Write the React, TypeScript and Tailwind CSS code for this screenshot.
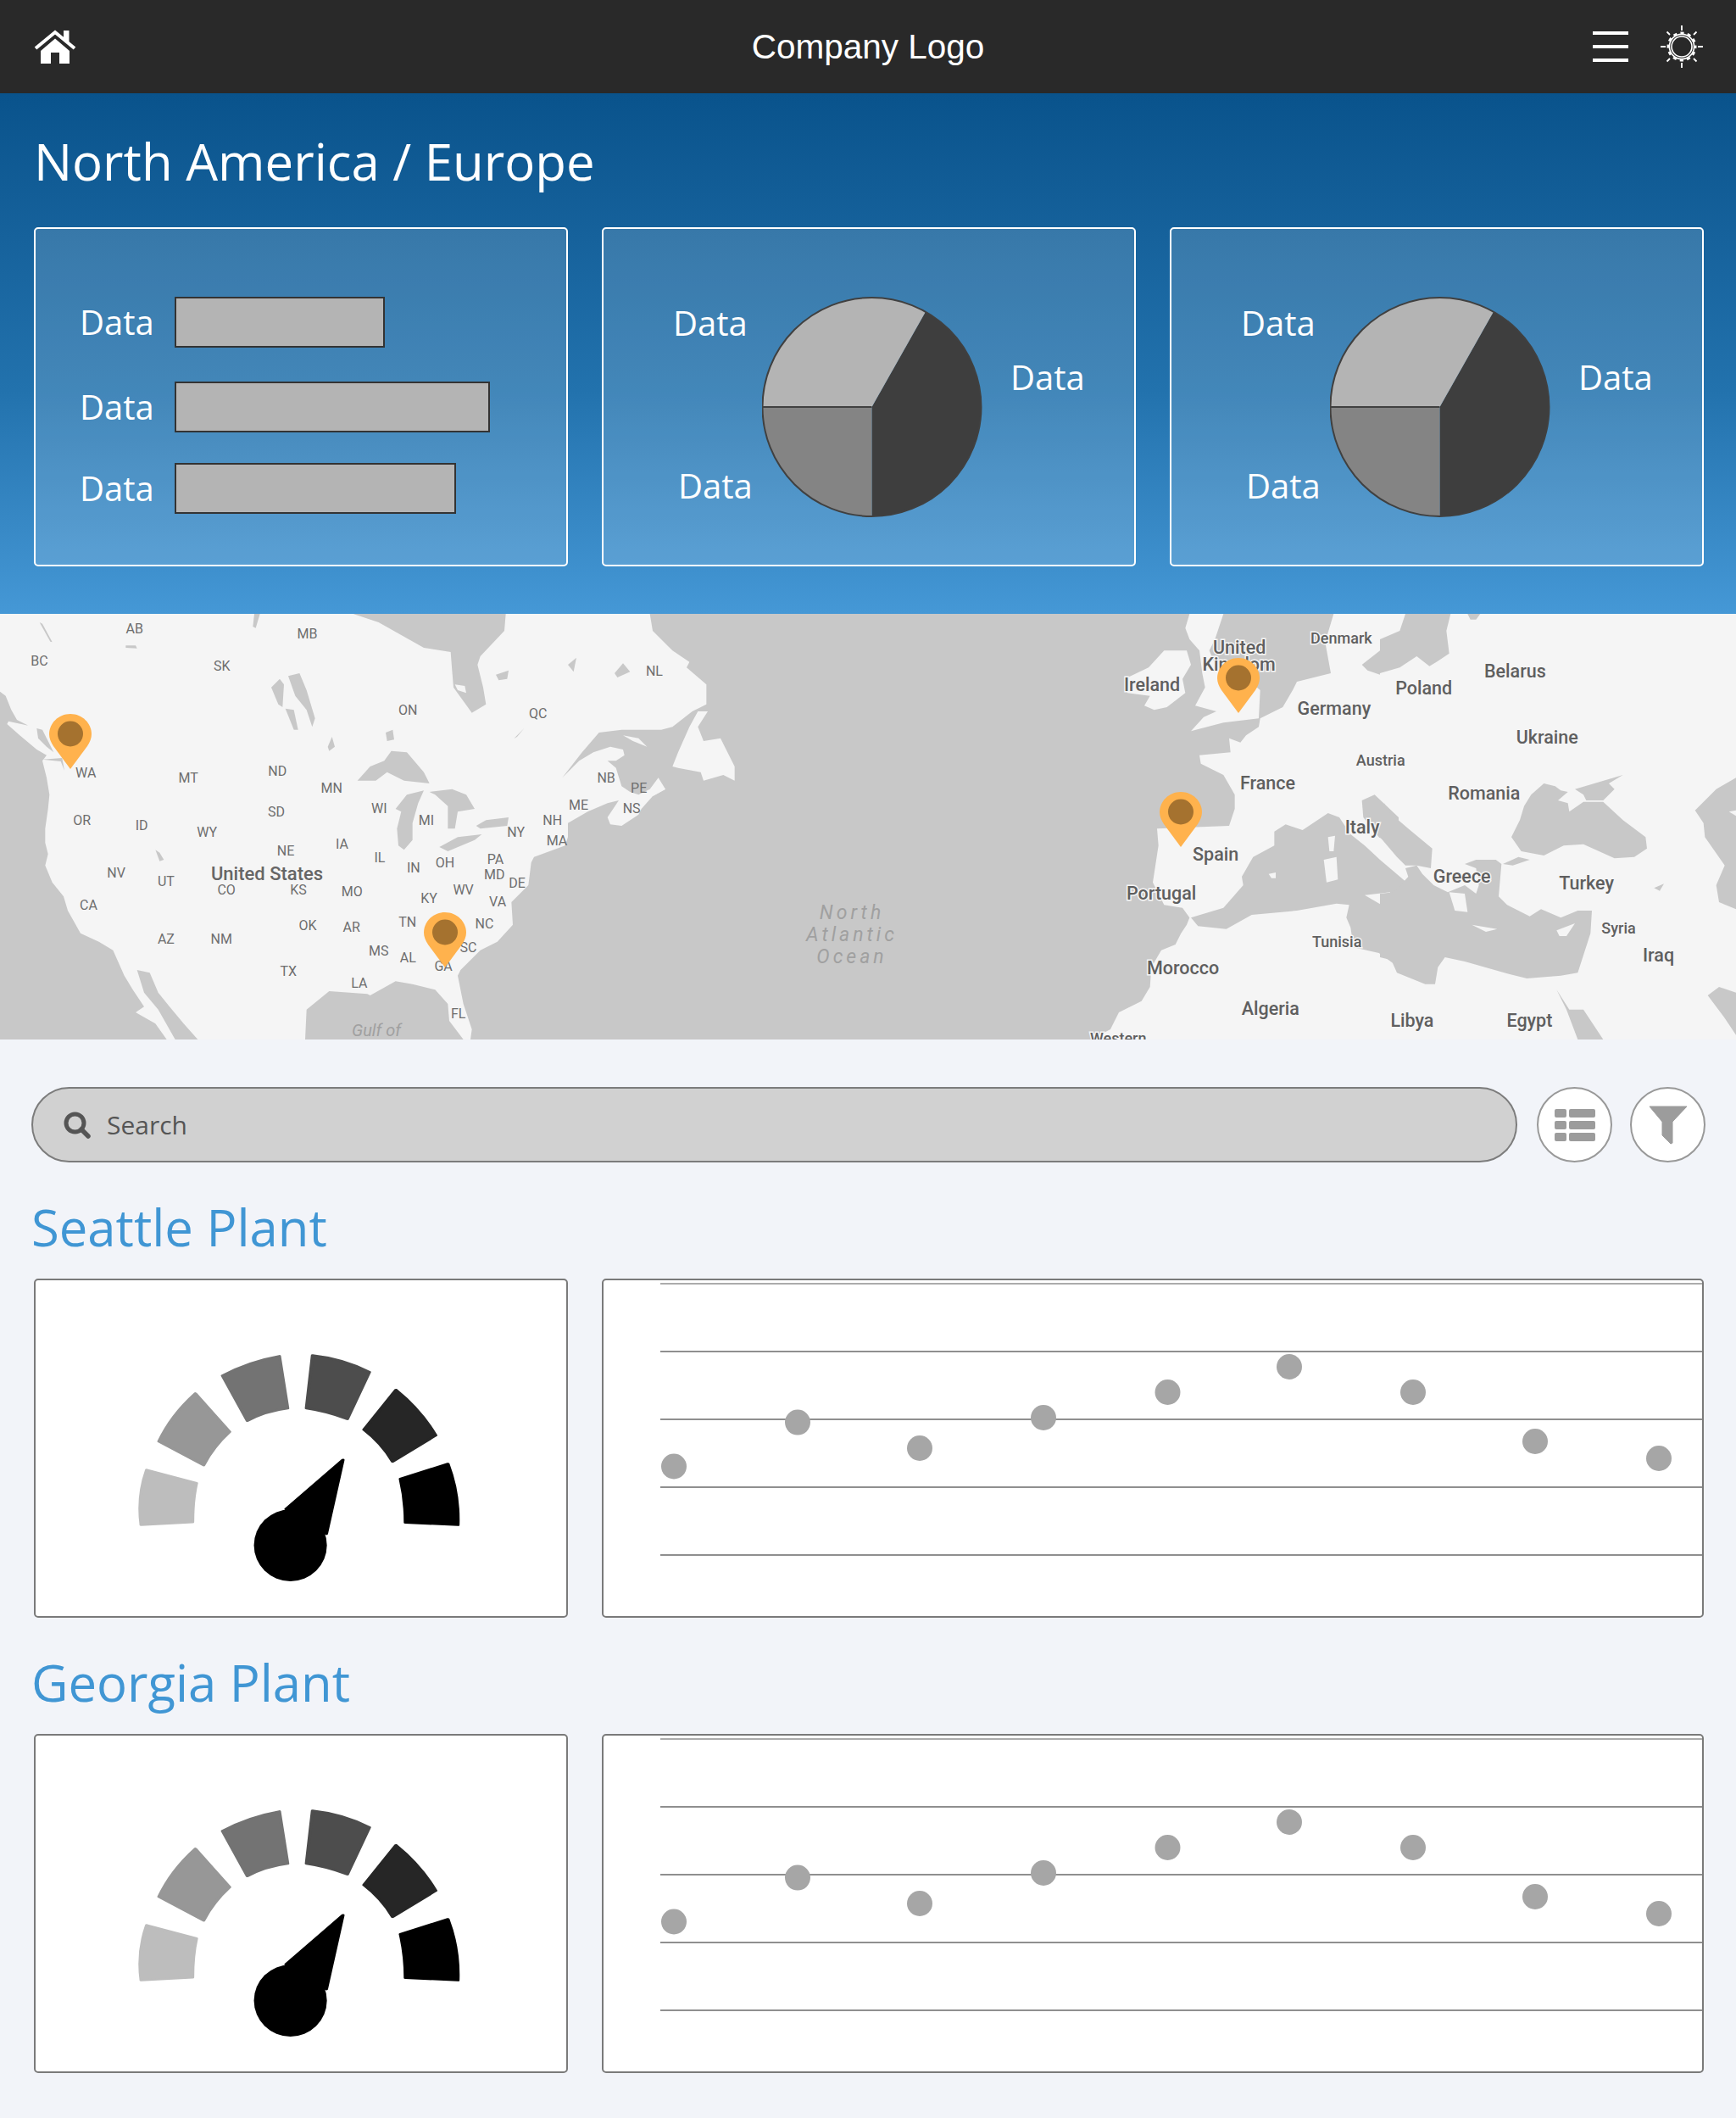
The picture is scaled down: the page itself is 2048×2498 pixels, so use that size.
// Map outlines are traced from four 3x crops, each group below scales them back down
const mapShapes: { x: number; land?: string[]; water?: string[]; islands?: string[] }[] = [
  {
    x: 0,
    water: [
      "0,275 20,290 40,340 60,375 100,395 30,380 25,390 70,430 130,480 165,500 150,520 165,580 175,640 170,690 160,760 160,810 170,850 160,890 185,950 225,1000 240,1050 285,1130 350,1160 400,1190 440,1280 470,1330 510,1390 480,1410 550,1450 590,1506 0,1506",
      "485,1260 530,1270 560,1340 600,1390 650,1450 700,1506 620,1506 560,1400 510,1340",
      "130,405 150,410 190,490 165,470 135,440",
      "150,515 220,510 228,555 215,522",
      "140,30 150,35 185,100 178,98",
      "1020,220 1060,210 1085,270 1115,370 1105,400 1085,340 1045,290",
      "960,260 990,230 1005,250 1000,330 985,320",
      "1010,335 1040,340 1055,410 1040,410",
      "550,835 565,845 580,870 565,875",
      "1080,1506 1085,1400 1165,1335 1300,1345 1310,1350 1400,1300 1460,1310 1540,1330 1585,1380 1590,1440 1640,1506",
      "900,0 920,0 905,50 895,45",
      "1160,470 1175,435 1185,470 1165,485",
      "445,112 480,112 485,122 445,120",
    ],
  },
  {
    x: 400,
    water: [
      "50,0 590,0 585,60 500,150 490,180 510,260 520,320 470,350 405,260 400,200 395,135 300,120 140,30",
      "1100,0 1110,60 1180,130 1240,170 1230,190 1300,250 1300,320 1250,345 1180,400 1140,410 1000,410 920,420 860,490 790,580 850,520 900,490 960,470 1005,480 1010,500 980,520 950,520 980,545 1000,610 1030,630 1060,640 1100,620 1130,580 1155,620 1110,645 1070,690 1060,710 1000,750 960,745 950,720 990,660 950,670 880,700 810,740 810,790 800,820 690,860 680,880 670,960 610,1020 615,1100 560,1160 500,1190 430,1260 420,1280 440,1380 470,1470 465,1506 1500,1506 1500,0",
      "65,590 110,540 160,520 185,485 240,490 300,560 320,600 230,590 170,560 130,590",
      "200,690 240,640 300,625 280,670 260,740 260,800 230,835 210,820 205,760 220,700",
      "320,630 400,620 450,640 480,690 420,700 410,760 385,760 385,680 340,640",
      "355,825 420,790 505,780 480,800 385,840",
      "485,750 520,730 600,720 595,750 500,760",
      "165,420 190,410 195,445 170,450",
      "555,215 600,200 595,230 565,235",
      "975,210 1005,175 1030,205 985,225",
      "810,180 840,155 830,205",
      "620,440 655,405 630,435",
    ],
    islands: [
      "1180,540 1200,490 1240,400 1270,345 1305,345 1270,400 1290,450 1350,440 1380,500 1400,540 1400,590 1360,570 1290,590 1280,560 1200,545",
      "1005,430 1060,440 1090,470 1040,450",
      "410,250 445,255 450,280 420,270",
      "1130,600 1155,620 1110,645",
    ],
  },
  {
    x: 1230,
    land: [
      "1020,210 900,240 885,270 850,330 770,370 765,400 720,430 700,455 660,440 665,490 555,500 560,530 640,570 680,640 680,690 660,750 405,760 410,820 390,950 430,1030 495,1040 520,1075 510,1100 490,1130 470,1170 420,1190 385,1250 380,1320 350,1370 270,1410 240,1470 170,1506 2460,1506 2460,0 1030,0 1000,100",
      "505,50 520,0 640,0 610,90 590,130 620,200 700,210 770,270 765,370 640,385 525,415 570,365 615,345 540,325 575,260 565,210 555,130 520,90",
      "375,190 430,130 510,130 525,180 495,230 505,280 440,330 395,340 360,325 380,290 300,280 290,230",
    ],
    water: [
      "525,1075 640,1040 710,960 705,930 745,860 820,820 820,770 860,745 920,765 1010,705 1050,720 1090,780 1140,820 1194,870 1300,960 1300,1265 1260,1250 1190,1200 1100,1180 1090,1110 1075,1075 1085,1030 1040,1025 900,1050 740,1065 650,1115 550,1105",
      "1130,660 1175,640 1260,720 1260,830 1190,790 1135,720",
      "1130,180 1194,130 1194,215 1150,200",
    ],
    islands: [
      "1140,995 1230,985 1225,1045",
      "800,920 825,915 825,935 810,935",
      "1010,790 1035,785 1030,840 1015,840",
      "995,870 1040,860 1045,940 1005,950",
    ],
  },
  {
    x: 1628,
    water: [
      "0,90 70,60 90,0 250,0 235,60 245,140 200,170 175,185 130,150 70,190 0,210",
      "0,700 15,670 30,700 100,760 185,830 180,900 130,890 90,890 60,860 0,790",
      "0,990 50,985 100,930 90,900 130,890 150,920 190,960 240,985 300,960 340,990 350,960 340,900 300,885 340,870 410,870 430,885 420,1000 450,1030 490,1050 530,1070 570,1045 640,1075 700,1050 750,1050 745,1130 700,1270 640,1280 520,1290 440,1270 300,1230 230,1215 205,1250 195,1310 160,1310 60,1270 40,1225 0,1215",
      "465,790 495,730 510,680 535,640 580,600 620,610 640,625 665,630 630,660 665,670 670,700 720,665 790,665 860,730 940,790 945,830 900,860 830,865 720,815 650,820 580,855 500,840",
      "690,620 860,570 810,600 830,620 790,660 730,660 720,640",
      "435,885 490,860 530,870 470,890",
      "1260,580 1190,620 1115,695 1145,740 1150,790 1220,890 1190,960 1200,1020 1260,1045",
      "625,1330 670,1400 720,1400 790,1506 700,1506 660,1400",
      "1160,1350 1200,1320 1260,1340 1260,1490 1220,1430",
      "310,0 355,0 340,20 320,20",
      "970,970 1005,955 990,980",
    ],
    islands: [
      "245,985 300,990 310,1055 265,1050",
      "325,1100 415,1115 375,1125",
      "625,1120 690,1095 660,1140 635,1140",
      "1235,700 1260,695 1260,715",
    ],
  },
];

const wx = 1024 / 1568;
const westLabels: [string, number, number][] = [
  ["AB", 243, 80], ["MB", 555, 98], ["BC", 71, 195], ["SK", 401, 213], ["NL", 1182, 230], ["ON", 737, 368], ["QC", 972, 380],
  ["WA", 155, 590], ["MT", 340, 608], ["ND", 501, 584], ["MN", 599, 644], ["NB", 1095, 608], ["PE", 1154, 644], ["ME", 1045, 704],
  ["NS", 1141, 717], ["WI", 685, 716], ["SD", 499, 728], ["NH", 998, 758], ["OR", 148, 758], ["ID", 256, 776], ["WY", 374, 800],
  ["MI", 770, 758], ["NY", 932, 800], ["MA", 1006, 832], ["IA", 618, 842], ["NE", 516, 866], ["IL", 686, 890], ["PA", 895, 896],
  ["OH", 804, 908], ["IN", 747, 926], ["MD", 893, 950], ["NV", 210, 944], ["UT", 300, 974], ["DE", 934, 980], ["CO", 409, 1004],
  ["KS", 539, 1004], ["MO", 636, 1010], ["WV", 837, 1004], ["KY", 775, 1034], ["VA", 899, 1046], ["CA", 160, 1058], ["NC", 875, 1124],
  ["TN", 736, 1120], ["OK", 556, 1130], ["AR", 635, 1136], ["AZ", 300, 1178], ["NM", 400, 1178], ["SC", 846, 1208], ["MS", 684, 1220],
  ["AL", 737, 1244], ["GA", 801, 1276], ["TX", 521, 1292], ["LA", 649, 1336], ["FL", 828, 1444],
];
const eastLabels: [string, number, number, number][] = [
  ["Denmark", 855, 110, 18], ["United", 671, 146, 21.5], ["Kingdom", 670, 208, 21.5], ["Belarus", 1169, 232, 21.5], ["Ireland", 513, 278, 21.5],
  ["Poland", 1004, 290, 21.5], ["Germany", 842, 364, 21.5], ["Ukraine", 1227, 465, 21.5], ["Austria", 926, 543, 18], ["France", 722, 628, 21.5],
  ["Romania", 1113, 663, 21.5], ["Italy", 893, 783, 21.5], ["Spain", 628, 880, 21.5], ["Greece", 1073, 958, 21.5], ["Turkey", 1298, 980, 21.5],
  ["Portugal", 530, 1017, 21.5], ["Syria", 1356, 1137, 18], ["Tunisia", 847, 1185, 18], ["Iraq", 1428, 1235, 21.5], ["Morocco", 569, 1282, 21.5],
  ["Algeria", 727, 1426, 21.5], ["Libya", 983, 1468, 21.5], ["Egypt", 1195, 1468, 21.5], ["Western", 452, 1528, 18],
];
const pins = [
  { x: 83, y: 907 },
  { x: 525, y: 1141 },
  { x: 1461, y: 841 },
  { x: 1393, y: 999 },
];
const pieLabels = [
  { left: "left-[82px]", top: "top-[84px]" },
  { left: "left-[88px]", top: "top-[276px]" },
  { left: "left-[480px]", top: "top-[148px]" },
];
const bars = [
  { label: "Data", width: "w-[248px]", space: "" },
  { label: "Data", width: "w-[372px]", space: "mt-[40px]" },
  { label: "Data", width: "w-[332px]", space: "mt-[36px]" },
];
const dots = [
  [795, 1729.5], [941, 1677.6], [1085, 1708], [1231, 1672], [1377.5, 1642], [1521, 1612], [1667, 1642], [1811, 1700], [1957, 1720],
];

function WorldMap() {
  return (
    <svg viewBox="0 0 2048 502" className="block w-full h-[502px] bg-[#c8c8c8]">
      <rect x="0" y="0" width="900" height="502" fill="#f5f5f5" />
      {mapShapes.map((group) => (
        <g key={group.x} transform={`translate(${group.x} 0) scale(${1 / 3})`}>
          {group.land?.map((p) => <polygon key={p} points={p} fill="#f5f5f5" />)}
          {group.water?.map((p) => <polygon key={p} points={p} fill="#c8c8c8" />)}
          {group.islands?.map((p) => <polygon key={p} points={p} fill="#f5f5f5" />)}
        </g>
      ))}
      <g fontFamily="Roboto, sans-serif" textAnchor="middle" fill="#6e6e6e">
        {westLabels.map(([t, x, y]) => (
          <text key={t} x={x * wx} y={y / 3 - 4} fontSize="16">{t}</text>
        ))}
        <text x={315} y={314} fontSize="22" fontWeight="500" fill="#666">United States</text>
        {eastLabels.map(([t, x, y, s]) => (
          <text key={t} x={1024 + x * wx} y={y / 3 - 2} fontSize={s} fontWeight="500" fill="#5f5f5f" stroke="#f5f5f5" strokeWidth="3" paintOrder="stroke">{t}</text>
        ))}
        <g fontSize="23" fontStyle="italic" letterSpacing="4" fill="#a0a0a0">
          <text x={1005} y={360}>North</text>
          <text x={1005} y={386}>Atlantic</text>
          <text x={1005} y={412}>Ocean</text>
        </g>
        <text x={444} y={498} fontSize="20" fontStyle="italic" fill="#a0a0a0">Gulf of</text>
      </g>
      {pins.map((p) => (
        <g key={p.x} transform={`translate(${p.x} ${p.y - 724})`}>
          <path d="M0 0 L-20 -27 C-23 -32 -25 -36 -25 -41 C-25 -54 -14 -65 0 -65 C14 -65 25 -54 25 -41 C25 -36 23 -32 20 -27Z" fill="#ffb24d" />
          <circle cx="0" cy="-41.5" r="15" fill="#a5722f" />
        </g>
      ))}
    </svg>
  );
}

function BarCard() {
  return (
    <div className="h-[400px] rounded-[5px] border-2 border-white bg-white/15 pt-[80px] pl-[52px]">
      {bars.map((b, i) => (
        <div key={i} className={`flex items-center h-[60px] ${b.space}`}>
          <span className="w-[112px] text-[40px] text-white">{b.label}</span>
          <div className={`h-full bg-[#b4b4b4] border-2 border-[#333] ${b.width}`} />
        </div>
      ))}
    </div>
  );
}

function PieCard() {
  return (
    <div className="relative h-[400px] rounded-[5px] border-2 border-white bg-white/15">
      {pieLabels.map((l, i) => (
        <span key={i} className={`absolute text-[40px] leading-[54px] text-white ${l.left} ${l.top}`}>Data</span>
      ))}
      <svg viewBox="0 0 260 260" className="absolute left-[187px] top-[80px] w-[260px] h-[260px]">
        <path d="M129.5 130 L192.9 17.7 A129 129 0 0 1 129.5 259Z" fill="#3e3e3e" />
        <path d="M129.5 130 L129.5 259 A129 129 0 0 1 0.5 130Z" fill="#848484" />
        <path d="M129.5 130 L0.5 130 A129 129 0 0 1 192.9 17.7Z" fill="#b4b4b4" />
        <circle cx="129.5" cy="130" r="129" fill="none" stroke="#404040" strokeWidth="2" />
        <path d="M1 130 L129.5 130" stroke="#404040" strokeWidth="2" />
      </svg>
    </div>
  );
}

function Gauge() {
  return (
    <div className="h-[400px] rounded-[5px] border-2 border-[#7a7a7a] bg-white">
      <svg viewBox="64 592 960 944" preserveAspectRatio="none" className="block w-full h-full" strokeLinejoin="round" strokeWidth="6">
        <path d="M265 1125 L355 1162 Q348 1210 348 1272 L255 1280 Q248 1200 265 1125Z" fill="#bdbdbd" stroke="#bdbdbd" />
        <path d="M353 910 L415 1018 Q385 1060 368 1112 L287 1045 Q310 970 353 910Z" fill="#979797" stroke="#979797" />
        <path d="M505 805 L520 952 Q480 960 447 987 L402 860 Q450 820 505 805Z" fill="#737373" stroke="#737373" />
        <path d="M565 803 Q620 812 668 850 L628 982 Q590 960 554 952Z" fill="#4d4d4d" stroke="#4d4d4d" />
        <path d="M716 900 Q760 955 788 1028 L710 1102 Q690 1050 658 1012Z" fill="#262626" stroke="#262626" />
        <path d="M810 1108 Q830 1190 828 1280 L733 1273 Q733 1210 724 1150Z" fill="#000" stroke="#000" />
        <ellipse cx="525" cy="1337" rx="66" ry="101" fill="#000" />
        <path d="M620 1097 L517 1235 L590 1305Z" fill="#000" stroke="#000" strokeWidth="6" />
      </svg>
    </div>
  );
}

function DotChart() {
  return (
    <div className="h-[400px] rounded-[5px] border-2 border-[#7a7a7a] bg-white overflow-hidden">
      <svg viewBox="712 1510 1296 396" className="block w-full h-full">
        {[1514, 1594, 1674, 1754, 1834].map((y, i) => (
          <line key={y} x1="779" x2="2008" y1={y} y2={y} stroke={i === 0 ? "#ababab" : "#8f8f8f"} strokeWidth="2" />
        ))}
        {dots.map(([x, y]) => (
          <circle key={x} cx={x} cy={y} r="15" fill="#a6a6a6" />
        ))}
      </svg>
    </div>
  );
}

function PlantSection({ name }: { name: string }) {
  return (
    <section>
      <h2 className="h-[137px] pt-[16px] flex items-center text-[59.8px] text-[#4096d4]">{name}</h2>
      <div className="ml-[3px] mr-[2px] grid grid-cols-[630px_1fr] gap-10">
        <Gauge />
        <DotChart />
      </div>
    </section>
  );
}

export default function App() {
  return (
    <div className="w-[2048px] h-[2498px] bg-[#f2f4f9] font-['Open_Sans',sans-serif]">
      <header className="h-[110px] bg-[#292929] grid grid-cols-3 items-center px-[39px] text-white">
        <svg viewBox="0 0 52 42" className="w-[52px] h-[42px]" fill="#fff">
          <path d="M3 23 L26 4 L49 23" fill="none" stroke="#fff" strokeWidth="4" />
          <rect x="36" y="2" width="6.5" height="13" />
          <path d="M9 26 L26 11.5 L43 26 V41 H31 V28 H21 V41 H9Z" />
        </svg>
        <div className="text-center text-[40.5px] font-['Liberation_Sans',sans-serif]">Company Logo</div>
        <div className="flex items-center justify-end gap-[38px]">
          <div className="flex flex-col gap-3 w-[42px]">
            <div className="h-1 bg-white" />
            <div className="h-1 bg-white" />
            <div className="h-1 bg-white" />
          </div>
          <svg viewBox="0 0 50 50" className="w-[50px] h-[50px]" fill="none" stroke="#fff">
            <circle cx="25" cy="25" r="12" strokeWidth="1.6" />
            <circle cx="25" cy="25" r="14.6" strokeWidth="1.6" />
            <circle cx="25" cy="25" r="16" strokeWidth="3" strokeDasharray="4.2 4.18" strokeDashoffset="2.1" />
            <path d="M25 0v6M25 44v6M0 25h6M44 25h6M7.5 7.5l3.5 3.5M39 39l3.5 3.5M7.5 42.5l3.5-3.5M39 11l3.5-3.5" strokeWidth="1.8" />
          </svg>
        </div>
      </header>

      <section className="h-[614px] bg-gradient-to-b from-[#09538c] via-[#2272ad] via-[57%] to-[#4598d6] pl-10 pr-[38px]">
        <h1 className="h-[158px] pt-[4px] flex items-center text-[59.9px] text-white">North America / Europe</h1>
        <div className="grid grid-cols-3 gap-10">
          <BarCard />
          <PieCard />
          <PieCard />
        </div>
      </section>

      <WorldMap />

      <main className="pl-[37px] pr-[36px] pt-[56px]">
        <div className="flex items-center gap-[21px]">
          <div className="mr-[2px] flex-1 h-[89px] rounded-full border-2 border-[#7c7c7c] bg-[#d1d1d1] flex items-center pl-[36px] gap-[19px] text-[#555]">
            <svg viewBox="0 0 32 32" className="w-[32px] h-[32px]" fill="none" stroke="#555" strokeLinecap="round">
              <circle cx="13.5" cy="13.5" r="10.5" strokeWidth="5" />
              <path d="M21 21 L29 29" strokeWidth="5.5" />
            </svg>
            <span className="text-[30px]">Search</span>
          </div>
          <button className="w-[89px] h-[89px] rounded-full border-2 border-[#999] bg-white flex items-center justify-center">
            <svg viewBox="0 0 48 38" className="w-[48px] h-[38px]" fill="#9c9c9c">
              <rect x="0" y="0" width="14" height="10" rx="2" />
              <rect x="17" y="0" width="31" height="10" rx="2" />
              <rect x="0" y="14" width="14" height="10" rx="2" />
              <rect x="17" y="14" width="31" height="10" rx="2" />
              <rect x="0" y="28" width="14" height="10" rx="2" />
              <rect x="17" y="28" width="31" height="10" rx="2" />
            </svg>
          </button>
          <button className="w-[89px] h-[89px] rounded-full border-2 border-[#999] bg-white flex items-center justify-center">
            <svg viewBox="0 0 46 46" className="w-[46px] h-[46px]" fill="#9c9c9c">
              <path d="M1 1 H45 L28 19 V44 L26 45 L16 35 V19 Z" stroke="#9c9c9c" strokeLinejoin="round" />
            </svg>
          </button>
        </div>
        <PlantSection name="Seattle Plant" />
        <PlantSection name="Georgia Plant" />
      </main>
    </div>
  );
}
